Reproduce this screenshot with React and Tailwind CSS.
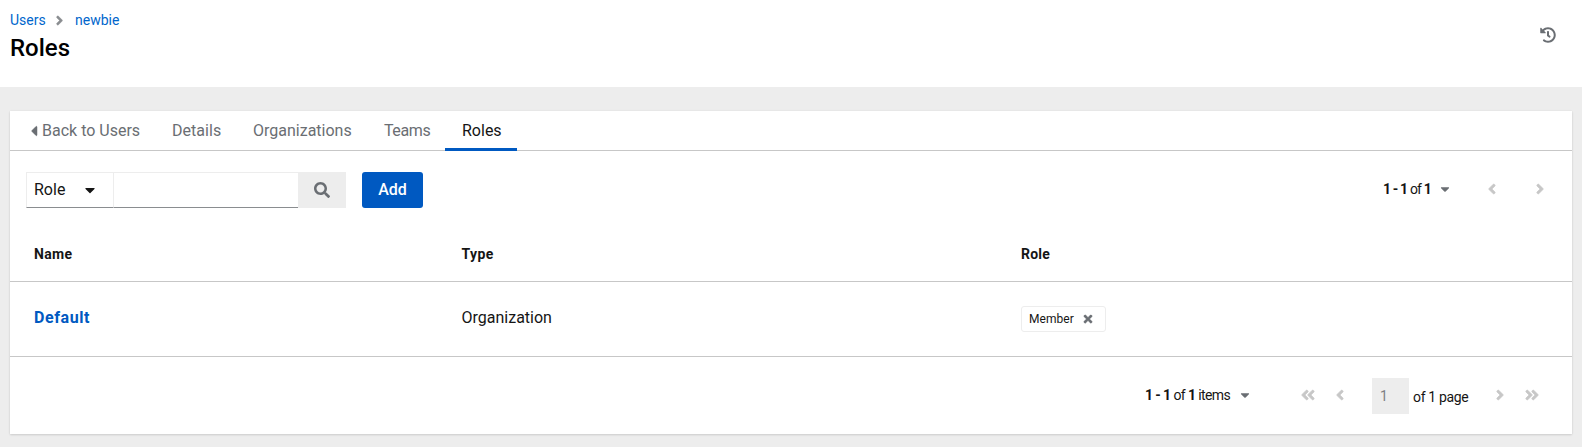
import React from "react";
import {
  FaAngleDoubleLeft,
  FaAngleDoubleRight,
  FaAngleLeft,
  FaAngleRight,
  FaCaretDown,
  FaCaretLeft,
  FaHistory,
  FaSearch,
  FaTimes,
} from "react-icons/fa";

function PageHeader() {
  return (
    <header className="flex h-[87px] justify-between bg-white pl-[10px] pr-[26px]">
      <div className="pt-[10px]">
        <nav className="flex h-[21px] items-center text-[14px] leading-[21px] text-[#0066cc]">
          <a className="w-[42px]">Users</a>
          <FaAngleRight className="size-[15px] stroke-[#8a8d90] stroke-[10px] text-[#8a8d90]" />
          <a className="ml-[8px]">newbie</a>
        </nav>
        <h1 className="mt-px text-[24px] font-medium leading-[32px] text-black">Roles</h1>
      </div>
      <FaHistory className="mt-[27px] size-[16px] text-[#6a6e73]" />
    </header>
  );
}

function Tabs() {
  return (
    <nav className="flex h-[40px] border-b border-[#c7c7c7] text-[16px] leading-[40px] text-[#6a6e73]">
      <a className="flex w-[146px] items-center pl-[16px]">
        <FaCaretLeft className="size-[16px] stroke-[#6a6e73] stroke-[16px]" />
        <span>Back to Users</span>
      </a>
      <a className="w-[81px] pl-[16px] tracking-[0.05px]">Details</a>
      <a className="w-[131px] pl-[16px]">Organizations</a>
      <a className="w-[77px] pl-[16px] tracking-[-0.4px]">Teams</a>
      <a className="-mb-px w-[72px] border-b-[3px] border-[#0059c1] pl-[17px] text-[#151515]">Roles</a>
    </nav>
  );
}

function Toolbar() {
  return (
    <div className="flex h-[78px] items-start pl-[16px] pt-[21px] text-[16px] leading-[34px] text-[#151515]">
      <button className="flex h-[36px] w-[88px] items-center border border-[#ededed] border-b-[#8a8d90] pl-[7px] text-left">
        <span className="w-[48px]">Role</span>
        <FaCaretDown className="size-[16px]" />
      </button>
      <input className="h-[36px] w-[184px] border-y border-[#ededed] border-b-[#8a8d90] outline-none" />
      <button className="flex h-[36px] w-[48px] items-center justify-center bg-[#ededed] pb-px text-[#6a6e73]">
        <FaSearch className="size-[16px]" />
      </button>
      <button className="ml-[16px] h-[36px] w-[61px] rounded-[3px] bg-[#0059c1] font-medium text-white">Add</button>
      <div className="ml-auto flex h-[34px] items-center pr-[24px] text-[14px]">
        <span className="w-[55px] whitespace-nowrap tracking-[-0.85px]"><b>1 - 1</b> of <b>1</b></span>
        <FaCaretDown className="size-[14px] text-[#6a6e73]" />
        <FaAngleLeft className="ml-[32px] size-[16px] stroke-[#c7c7c7] stroke-[20px] text-[#c7c7c7]" />
        <FaAngleRight className="ml-[32px] size-[16px] stroke-[#c7c7c7] stroke-[20px] text-[#c7c7c7]" />
      </div>
    </div>
  );
}

function RolesTable() {
  return (
    <div className="text-[#151515]">
      <div className="grid h-[53px] grid-cols-[427.5px_559.5px_1fr] border-b border-[#c7c7c7] pl-[24px] pt-[15px] text-[14px] font-bold leading-[21px] tracking-[0.3px]">
        <span>Name</span>
        <span className="tracking-[0.4px]">Type</span>
        <span className="tracking-[0.2px]">Role</span>
      </div>
      <div className="grid h-[75px] grid-cols-[427.5px_559.5px_1fr] border-b border-[#c7c7c7] pl-[24px] text-[16px] leading-[24px]">
        <a className="pt-[24px] font-bold tracking-[0.6px] text-[#0059c1]">Default</a>
        <span className="pt-[24px]">Organization</span>
        <span className="mt-[24px] flex h-[26px] w-[85px] items-center rounded-[3px] border border-[#ededed] pl-[7px] text-[12px]">
          <span className="w-[53px] tracking-[0.05px]">Member</span>
          <FaTimes className="size-[12px] stroke-[#6a6e73] stroke-[20px] text-[#6a6e73]" />
        </span>
      </div>
    </div>
  );
}

function Pagination() {
  return (
    <div className="flex h-[77px] items-start justify-end pr-[32px] pt-[21px] text-[14px] text-[#151515]">
      <div className="flex h-[36px] items-center">
        <span className="-mt-px w-[93px] whitespace-nowrap tracking-[-0.6px]"><b>1 - 1</b> of <b>1</b> items</span>
        <FaCaretDown className="-mt-[2px] size-[14px] text-[#6a6e73]" />
        <FaAngleDoubleLeft className="-mt-[2px] ml-[48px] size-[16px] stroke-[#c7c7c7] stroke-[20px] text-[#c7c7c7]" />
        <FaAngleLeft className="-mt-[2px] ml-[16px] size-[16px] stroke-[#c7c7c7] stroke-[20px] text-[#c7c7c7]" />
        <span className="ml-[24px] h-[36px] w-[37px] bg-[#ededed] pl-[8px] leading-[36px] text-[#7d8084]">1</span>
        <span className="ml-[4px] w-[79px] whitespace-nowrap pt-[2px] tracking-[-0.35px]">of 1 page</span>
        <FaAngleRight className="-mt-[2px] size-[16px] stroke-[#c7c7c7] stroke-[20px] text-[#c7c7c7]" />
        <FaAngleDoubleRight className="-mt-[2px] ml-[16px] size-[16px] stroke-[#c7c7c7] stroke-[20px] text-[#c7c7c7]" />
      </div>
    </div>
  );
}

export default function App() {
  return (
    <div className="h-[447px] overflow-hidden bg-[#ededed] font-['Roboto',sans-serif]">
      <PageHeader />
      <main className="mx-[10px] mt-[24px] h-[323px] bg-white shadow-[0_1px_2px_rgba(3,3,3,0.12),0_0_2px_rgba(3,3,3,0.06)]">
        <Tabs />
        <Toolbar />
        <RolesTable />
        <Pagination />
      </main>
    </div>
  );
}
